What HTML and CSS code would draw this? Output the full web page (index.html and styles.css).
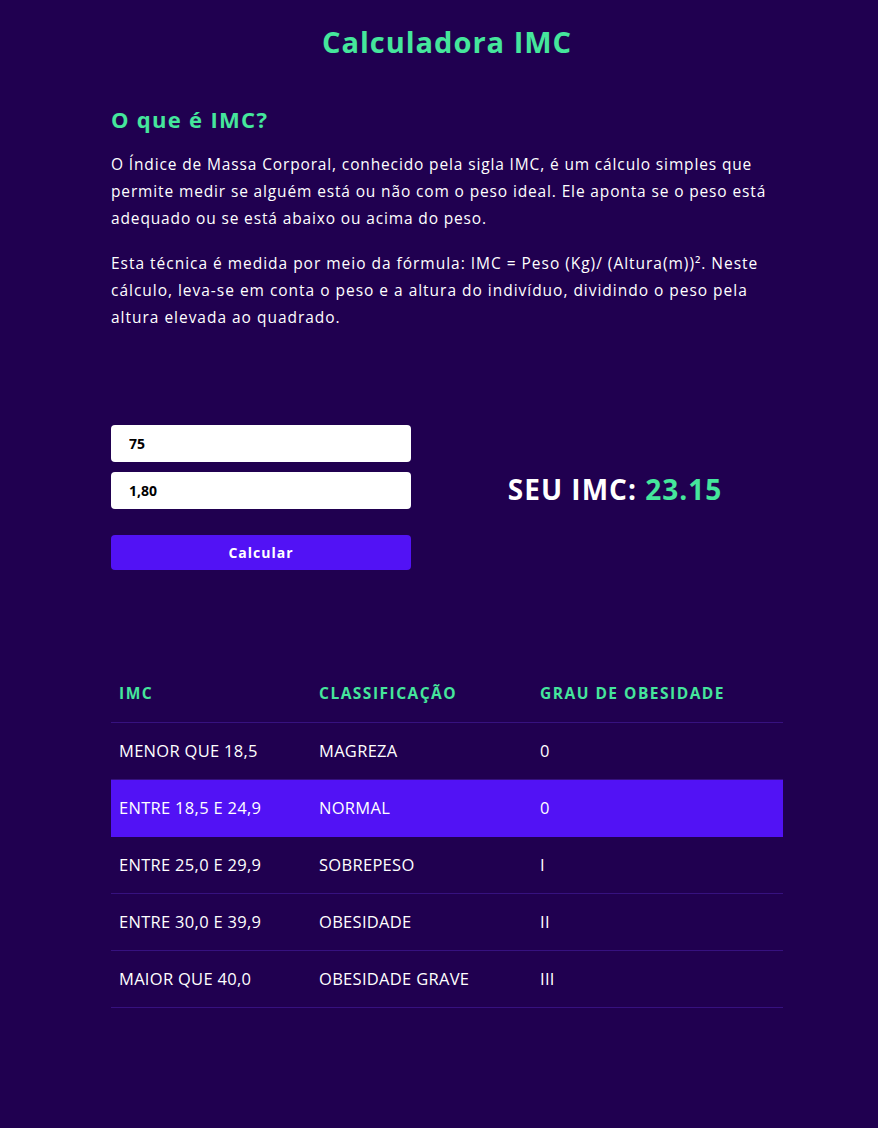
FILE: index.html
```html
<!DOCTYPE html>
<html lang="pt-BR">
<head>
<meta charset="utf-8">
<title>Calculadora IMC</title>
<link rel="stylesheet" href="styles.css">
</head>
<body>
<div class="container">
  <h1 class="title">Calculadora IMC</h1>
  <section class="about">
    <h2 class="subtitle">O que é IMC?</h2>
    <p class="text text-a">O Índice de Massa Corporal, conhecido pela sigla IMC, é um cálculo simples que permite medir se alguém está ou não com o peso ideal. Ele aponta se o peso está adequado ou se está abaixo ou acima do peso.</p>
    <p class="text text-b">Esta técnica é medida por meio da fórmula: IMC = Peso (Kg)/ (Altura(m))². Neste cálculo, leva-se em conta o peso e a altura do indivíduo, dividindo o peso pela altura elevada ao quadrado.</p>
  </section>
  <section class="calc">
    <form class="form">
      <input class="field" type="text" value="75">
      <input class="field" type="text" value="1,80">
      <button class="btn" type="button">Calcular</button>
    </form>
    <div class="result">SEU IMC: <span class="value">23.15</span></div>
  </section>
  <table class="table">
    <thead>
      <tr><th class="c1">IMC</th><th class="c2">CLASSIFICAÇÃO</th><th>GRAU DE OBESIDADE</th></tr>
    </thead>
    <tbody>
      <tr><td>MENOR QUE 18,5</td><td>MAGREZA</td><td>0</td></tr>
      <tr class="active"><td>ENTRE 18,5 E 24,9</td><td>NORMAL</td><td>0</td></tr>
      <tr><td>ENTRE 25,0 E 29,9</td><td>SOBREPESO</td><td>I</td></tr>
      <tr><td>ENTRE 30,0 E 39,9</td><td>OBESIDADE</td><td>II</td></tr>
      <tr><td>MAIOR QUE 40,0</td><td>OBESIDADE GRAVE</td><td>III</td></tr>
    </tbody>
  </table>
</div>
</body>
</html>
```
FILE: styles.css
```css
* { box-sizing: border-box; }
html, body { background: #200050; }
body {
  margin: 0;
  padding: 0 0 0 16px;
  font-family: "Open Sans", "DejaVu Sans", sans-serif;
  color: #ffffff;
}
.container {
  width: 672px;
  margin: 0 auto;
  padding-bottom: 120px;
}
.title {
  margin: 0;
  padding-top: 22px;
  text-align: center;
  font-size: 29px;
  line-height: 40px;
  font-weight: 700;
  letter-spacing: 1px;
  color: #45e69c;
}
.subtitle {
  margin: 42px 0 0;
  font-size: 22px;
  line-height: 30px;
  font-weight: 700;
  letter-spacing: 1.3px;
  color: #45e69c;
}
.text {
  margin: 17px 0 0;
  font-size: 15.5px;
  line-height: 27px;
}
.text-a { letter-spacing: 0.86px; }
.text-b { margin-top: 18px; letter-spacing: 0.98px; }
.calc {
  margin-top: 94px;
  display: grid;
  grid-template-columns: 1fr 1fr;
  align-items: center;
}
.form {
  display: flex;
  flex-direction: column;
  width: 300px;
}
.field {
  height: 37px;
  border: none;
  border-radius: 4px;
  padding: 0 18px;
  font-family: inherit;
  font-size: 14px;
  font-weight: 700;
  color: #000;
  background: #fff;
  margin-bottom: 10px;
  outline: none;
}
.btn {
  margin-top: 16px;
  height: 35px;
  border: none;
  border-radius: 4px;
  background: #5212f5;
  color: #fff;
  font-family: inherit;
  font-size: 14px;
  font-weight: 700;
  letter-spacing: 1px;
}
.result {
  text-align: center;
  font-size: 28px;
  font-weight: 700;
  letter-spacing: 1px;
  margin-top: -18px;
}
.value { color: #45e69c; }
.table {
  margin-top: 95px;
  width: 100%;
  border-collapse: collapse;
}
.table th, .table td {
  text-align: left;
  padding: 0 8px;
  height: 57px;
  border-bottom: 1px solid #36117f;
}
.table th {
  font-size: 15.5px;
  font-weight: 700;
  letter-spacing: 1.5px;
  color: #45e69c;
}
.table td {
  font-size: 16.5px;
  font-weight: 400;
  letter-spacing: 0.3px;
}
.c1 { width: 200px; }
.c2 { width: 221px; }
.table tr.active td { background: #5212f5; border-bottom-color: #5212f5; }
```
